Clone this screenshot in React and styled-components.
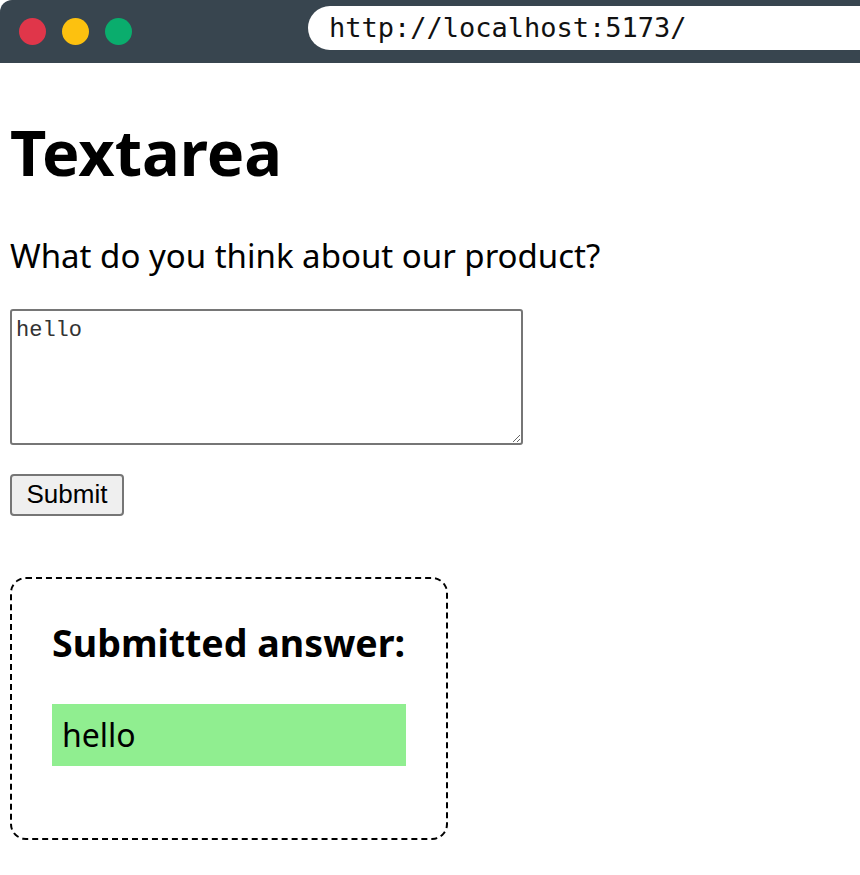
import React, { useState } from "react"
import styled, { createGlobalStyle } from "styled-components"

const GlobalStyle = createGlobalStyle`
  body {
    margin: 0;
    background: #fff;
    font-family: "Noto Sans", "Open Sans", sans-serif;
  }
`

const Chrome = styled.header`
  height: 63px;
  background: #38454f;
  border-top-left-radius: 12px;
  display: flex;
  align-items: center;
  padding-left: 19px;
`
const Dots = styled.div`
  display: flex;
  gap: 16px;
  width: 289px;
`
const Dot = styled.span`
  width: 27px;
  height: 27px;
  border-radius: 50%;
  background: ${(p) => p.color};
`
const UrlBar = styled.div`
  flex: 1;
  height: 44px;
  margin-top: -8px;
  background: #fff;
  border-radius: 22px 0 0 22px;
  display: flex;
  align-items: center;
  padding-left: 21px;
  font-family: "DejaVu Sans Mono", "Liberation Mono", monospace;
  font-size: 27px;
  color: #111;
`
const Main = styled.main`
  padding: 0 10px;
`
const Title = styled.h1`
  font-size: 63px;
  font-weight: 700;
  margin: 48px 0 42px;
  line-height: 1.3;
`
const Question = styled.label`
  display: block;
  font-size: 33px;
  margin-bottom: 31px;
  line-height: 1.3;
`
const TextBox = styled.textarea`
  display: block;
  box-sizing: border-box;
  width: 513px;
  height: 136px;
  border: 2px solid #767676;
  border-radius: 3px;
  padding: 6px 4px;
  font-family: "Liberation Mono", monospace;
  font-size: 22px;
  line-height: 1.3;
  color: #333;
  margin: 0;
`
const Button = styled.button`
  display: block;
  margin: 29px 0 61px;
  box-sizing: border-box;
  width: 114px;
  height: 42px;
  background: #efefef;
  border: 2px solid #767676;
  border-radius: 4px;
  font-family: "Liberation Sans", Arial, sans-serif;
  font-size: 26px;
  color: #000;
  padding: 0;
`
const AnswerCard = styled.section`
  box-sizing: border-box;
  width: 438px;
  height: 263px;
  border: 2px dashed #000;
  border-radius: 16px;
  padding: 30px 40px;
`
const AnswerTitle = styled.h2`
  font-size: 37.6px;
  font-weight: 700;
  white-space: nowrap;
  margin: 10px 0 36px;
  line-height: 1.3;
`
const Answer = styled.p`
  margin: 0;
  background: #90ee90;
  height: 62px;
  display: flex;
  align-items: center;
  padding-left: 10px;
  font-size: 32px;
`

export default function App() {
  const [text, setText] = useState("hello")
  return (
    <>
      <GlobalStyle />
      <Chrome>
        <Dots>
          <Dot color="#e0364a" />
          <Dot color="#fdc10f" />
          <Dot color="#0aad6d" />
        </Dots>
        <UrlBar>http://localhost:5173/</UrlBar>
      </Chrome>
      <Main>
        <Title>Textarea</Title>
        <Question htmlFor="feedback">What do you think about our product?</Question>
        <TextBox id="feedback" value={text} onChange={(e) => setText(e.target.value)} />
        <Button>Submit</Button>
        <AnswerCard>
          <AnswerTitle>Submitted answer:</AnswerTitle>
          <Answer>hello</Answer>
        </AnswerCard>
      </Main>
    </>
  )
}
